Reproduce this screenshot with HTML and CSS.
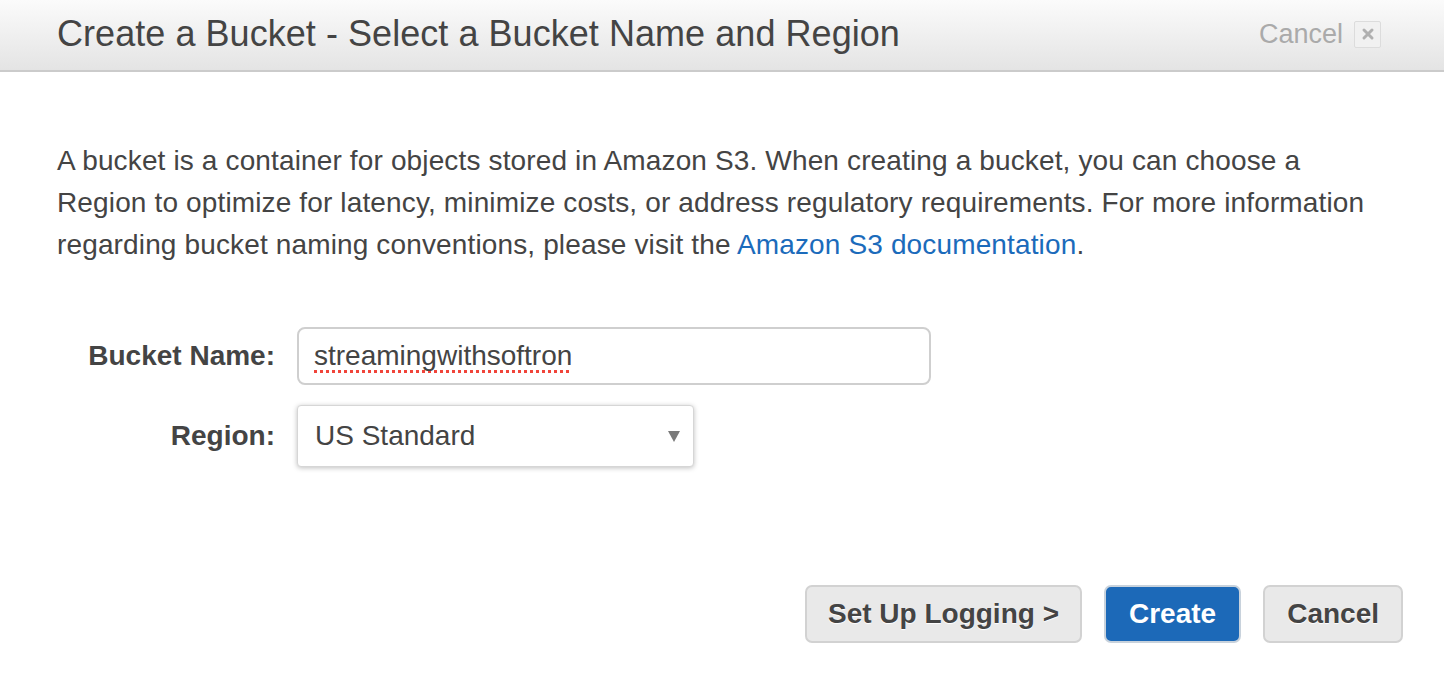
FILE: index.html
```html
<!DOCTYPE html>
<html>
<head>
<meta charset="utf-8">
<title>Create a Bucket</title>
<link rel="stylesheet" href="styles.css">
</head>
<body>
<div class="dialog">
  <div class="header">
    <div class="title">Create a Bucket - Select a Bucket Name and Region</div>
    <div class="close">
      <span class="close-text">Cancel</span>
      <span class="close-box">
        <svg width="16" height="16" viewBox="0 0 16 16"><path d="M4 4 L12 12 M12 4 L4 12" stroke="#b0b0b0" stroke-width="3" stroke-linecap="round"/></svg>
      </span>
    </div>
  </div>
  <div class="body">
    <p class="intro">A bucket is a container for objects stored in Amazon S3. When creating a bucket, you can choose a<br>Region to optimize for latency, minimize costs, or address regulatory requirements. For more information<br>regarding bucket naming conventions, please visit the <a class="link" href="#">Amazon S3 documentation</a>.</p>
    <div class="form">
      <div class="row">
        <div class="label">Bucket Name:</div>
        <div class="input"><span class="misspelled">streamingwithsoftron</span></div>
      </div>
      <div class="row">
        <div class="label">Region:</div>
        <div class="select"><span>US Standard</span><span class="arrow"></span></div>
      </div>
    </div>
    <div class="actions">
      <button class="btn logging">Set Up Logging &gt;</button>
      <button class="btn primary">Create</button>
      <button class="btn">Cancel</button>
    </div>
  </div>
</div>
</body>
</html>
```
FILE: styles.css
```css
html, body {
  margin: 0;
  padding: 0;
  background: #fff;
}
body {
  font-family: "Liberation Sans", Arial, Helvetica, sans-serif;
  color: #444;
}
.header {
  height: 72px;
  box-sizing: border-box;
  border-bottom: 2px solid #cbcbcb;
  background: linear-gradient(#fbfbfb, #e4e4e4);
  display: flex;
  align-items: center;
  justify-content: space-between;
  padding: 0 63px 2px 57px;
}
.title {
  font-size: 36px;
  letter-spacing: 0.05px;
  color: #444;
}
.close {
  display: flex;
  align-items: center;
  gap: 11px;
}
.close-text {
  font-size: 27px;
  color: #aaa;
}
.close-box {
  width: 25px;
  height: 25px;
  border: 1px solid #dcdcdc;
  border-radius: 2px;
  background: #f1f1f1;
  display: flex;
  align-items: center;
  justify-content: center;
}
.body {
  padding: 68px 57px 0 57px;
}
.intro {
  margin: 0;
  font-size: 28px;
  line-height: 42px;
  letter-spacing: 0.14px;
  color: #444;
}
.link {
  color: #1b6bbb;
  text-decoration: none;
}
.form {
  margin-top: 61px;
  display: flex;
  flex-direction: column;
  gap: 20px;
}
.row {
  display: flex;
  align-items: center;
  gap: 22px;
}
.label {
  width: 218px;
  text-align: right;
  font-size: 28px;
  font-weight: bold;
  color: #444;
}
.input {
  width: 634px;
  height: 58px;
  box-sizing: border-box;
  border: 2px solid #cfcfcf;
  border-radius: 8px;
  padding: 0 15px;
  display: flex;
  align-items: center;
  font-size: 28px;
  color: #444;
}
.misspelled {
  text-decoration: underline dotted #f0443a;
  text-decoration-thickness: 3px;
  text-underline-offset: 5px;
  text-decoration-skip-ink: none;
}
.select {
  width: 397px;
  height: 62px;
  box-sizing: border-box;
  border: 1px solid #d6d6d6;
  border-radius: 4px;
  box-shadow: 0 1px 5px rgba(0, 0, 0, 0.25);
  background: #fff;
  padding: 0 13px 0 17px;
  display: flex;
  align-items: center;
  justify-content: space-between;
  font-size: 28px;
  color: #444;
}
.arrow {
  width: 0;
  height: 0;
  border-left: 6px solid transparent;
  border-right: 6px solid transparent;
  border-top: 11px solid #7a7a7a;
}
.actions {
  margin-top: 118px;
  margin-right: -16px;
  display: flex;
  justify-content: flex-end;
  gap: 22px;
}
.btn {
  height: 58px;
  box-sizing: border-box;
  padding: 0 22px;
  border: 2px solid #d2d2d2;
  border-radius: 7px;
  background: #e9e9e9;
  font-family: "Liberation Sans", Arial, Helvetica, sans-serif;
  font-size: 28px;
  font-weight: bold;
  color: #444;
  text-shadow: 0 1px 1px #fff;
}
.btn.logging {
  padding: 0 21px;
}
.btn.primary {
  background: #1c69b8;
  border-color: #c8d2dc;
  color: #fff;
  text-shadow: none;
  padding: 0 23px;
}
```
